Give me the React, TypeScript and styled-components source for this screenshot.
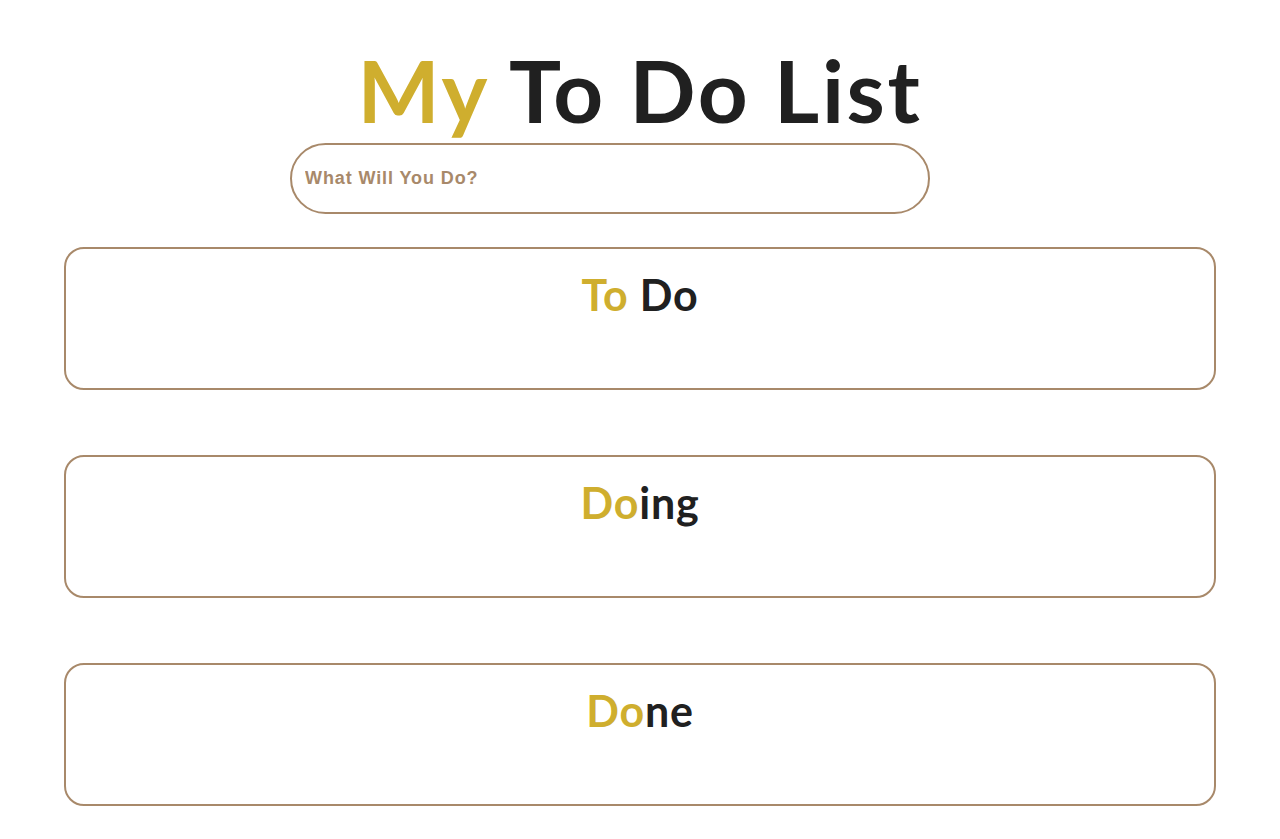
import React from "react";
import styled, { createGlobalStyle } from "styled-components";

const Global = createGlobalStyle`
  html, body { margin: 0; padding: 0; background: #ffffff; }
  body { font-family: "Comic Sans MS", "Lato", sans-serif; }
  * { box-sizing: border-box; }
`;

const Page = styled.main`
  display: flex;
  flex-direction: column;
  align-items: center;
  padding-top: 40px;
`;

const Title = styled.h1`
  margin: 0;
  font-family: "Comic Sans MS", "Lato", sans-serif;
  font-weight: 700;
  font-size: 87px;
  line-height: 100px;
  color: #202020;
  letter-spacing: 2.6px;
`;

const Accent = styled.span`
  color: #cfae2e;
`;

const Form = styled.form`
  width: 100%;
  display: flex;
  justify-content: center;
  padding-right: 60px;
  margin-top: 3px;
`;

const Input = styled.input`
  width: 640px;
  height: 71px;
  border: 2px solid #a8896a;
  border-radius: 36px;
  padding: 0 13px;
  font-family: "Liberation Sans", Arial, sans-serif;
  font-weight: 700;
  font-size: 18px;
  letter-spacing: 0.9px;
  color: #a8896a;
  outline: none;
  background: #fff;
  &::placeholder {
    color: #a8896a;
    opacity: 1;
  }
`;

const Lists = styled.section`
  width: 90%;
  display: flex;
  flex-direction: column;
  gap: 65px;
  margin-top: 33px;
`;

const Card = styled.div`
  height: 143px;
  border: 2px solid #a8896a;
  border-radius: 20px;
  display: flex;
  flex-direction: column;
  align-items: center;
  padding-top: 21px;
`;

const CardTitle = styled.h2`
  margin: 0;
  font-family: "Comic Sans MS", "Lato", sans-serif;
  font-weight: 700;
  font-size: 43px;
  line-height: 50px;
  letter-spacing: 0.8px;
  color: #202020;
`;

export default function App() {
  return (
    <>
      <Global />
      <Page>
        <Title>
          <Accent>My</Accent> To Do List
        </Title>
        <Form onSubmit={(e) => e.preventDefault()}>
          <Input placeholder="What Will You Do?" />
        </Form>
        <Lists>
          <Card>
            <CardTitle>
              <Accent>To</Accent> Do
            </CardTitle>
          </Card>
          <Card>
            <CardTitle>
              <Accent>Do</Accent>ing
            </CardTitle>
          </Card>
          <Card>
            <CardTitle>
              <Accent>Do</Accent>ne
            </CardTitle>
          </Card>
        </Lists>
      </Page>
    </>
  );
}
